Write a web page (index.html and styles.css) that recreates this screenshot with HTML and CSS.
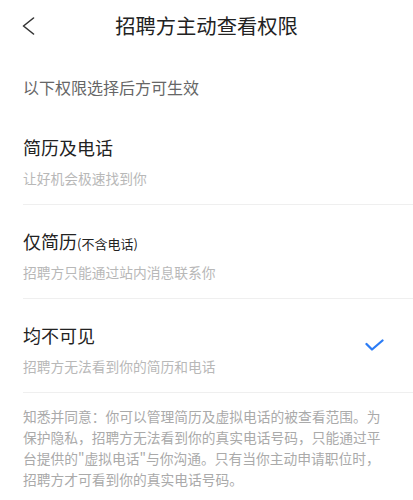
FILE: index.html
```html
<!DOCTYPE html>
<html lang="zh-CN">
<head>
<meta charset="utf-8">
<link rel="stylesheet" href="styles.css">
</head>
<body>
<div class="page">
  <header class="nav">
    <svg class="back" width="14" height="18" viewBox="0 0 14 18"><polyline points="11.5,1 1.5,9 11.5,17" fill="none" stroke="#333" stroke-width="1.6" stroke-linecap="round" stroke-linejoin="round"/></svg>
    <div class="nav-title">招聘方主动查看权限</div>
  </header>
  <div class="label">以下权限选择后方可生效</div>
  <div class="options">
    <div class="option">
      <div class="texts">
        <div class="opt-title">简历及电话</div>
        <div class="opt-sub">让好机会极速找到你</div>
      </div>
    </div>
    <div class="option">
      <div class="texts">
        <div class="opt-title">仅简历<span class="small">(不含电话)</span></div>
        <div class="opt-sub">招聘方只能通过站内消息联系你</div>
      </div>
    </div>
    <div class="option">
      <div class="texts">
        <div class="opt-title">均不可见</div>
        <div class="opt-sub">招聘方无法看到你的简历和电话</div>
      </div>
      <svg class="check" width="19" height="13" viewBox="0 0 19 13"><polyline points="1.5,5 7,10.5 17.5,1.5" fill="none" stroke="#2b7cf6" stroke-width="2.3" stroke-linecap="round" stroke-linejoin="round"/></svg>
    </div>
  </div>
  <p class="note">知悉并同意：你可以管理简历及虚拟电话的被查看范围。为保护隐私，招聘方无法看到你的真实电话号码，只能通过平台提供的"虚拟电话"与你沟通。只有当你主动申请职位时，招聘方才可看到你的真实电话号码。</p>
</div>
</body>
</html>
```

FILE: styles.css
```css
html, body {
  margin: 0;
  padding: 0;
  background: #fff;
}
body {
  font-family: "Noto Sans CJK SC", "Noto Sans", sans-serif;
  color: #222;
}
.page {
  width: 413px;
}
.nav {
  position: relative;
  height: 50px;
  display: flex;
  align-items: center;
  justify-content: center;
}
.back {
  position: absolute;
  left: 22px;
  top: 17px;
}
.nav-title {
  font-size: 20.3px;
  line-height: 28px;
  color: #222;
}
.label {
  margin: 26px 0 13px 23px;
  font-size: 16px;
  line-height: 22px;
  color: #666;
}
.option {
  margin-left: 23px;
  padding: 24px 29px 16px 0;
  border-bottom: 1px solid #efefef;
  display: flex;
  align-items: center;
  justify-content: space-between;
}
.opt-title {
  height: 24px;
  font-size: 18px;
  line-height: 24px;
  color: #222;
  overflow: visible;
}
.small {
  font-size: 13px;
  line-height: 1;
}
.opt-sub {
  margin-top: 9px;
  height: 20px;
  font-size: 13.75px;
  line-height: 20px;
  color: #b8b8b8;
}
.check {
  margin-top: -8px;
}
.note {
  margin: 0;
  padding: 13px 28px 0 23px;
  font-size: 13.75px;
  line-height: 21px;
  color: #aaa;
}
```
